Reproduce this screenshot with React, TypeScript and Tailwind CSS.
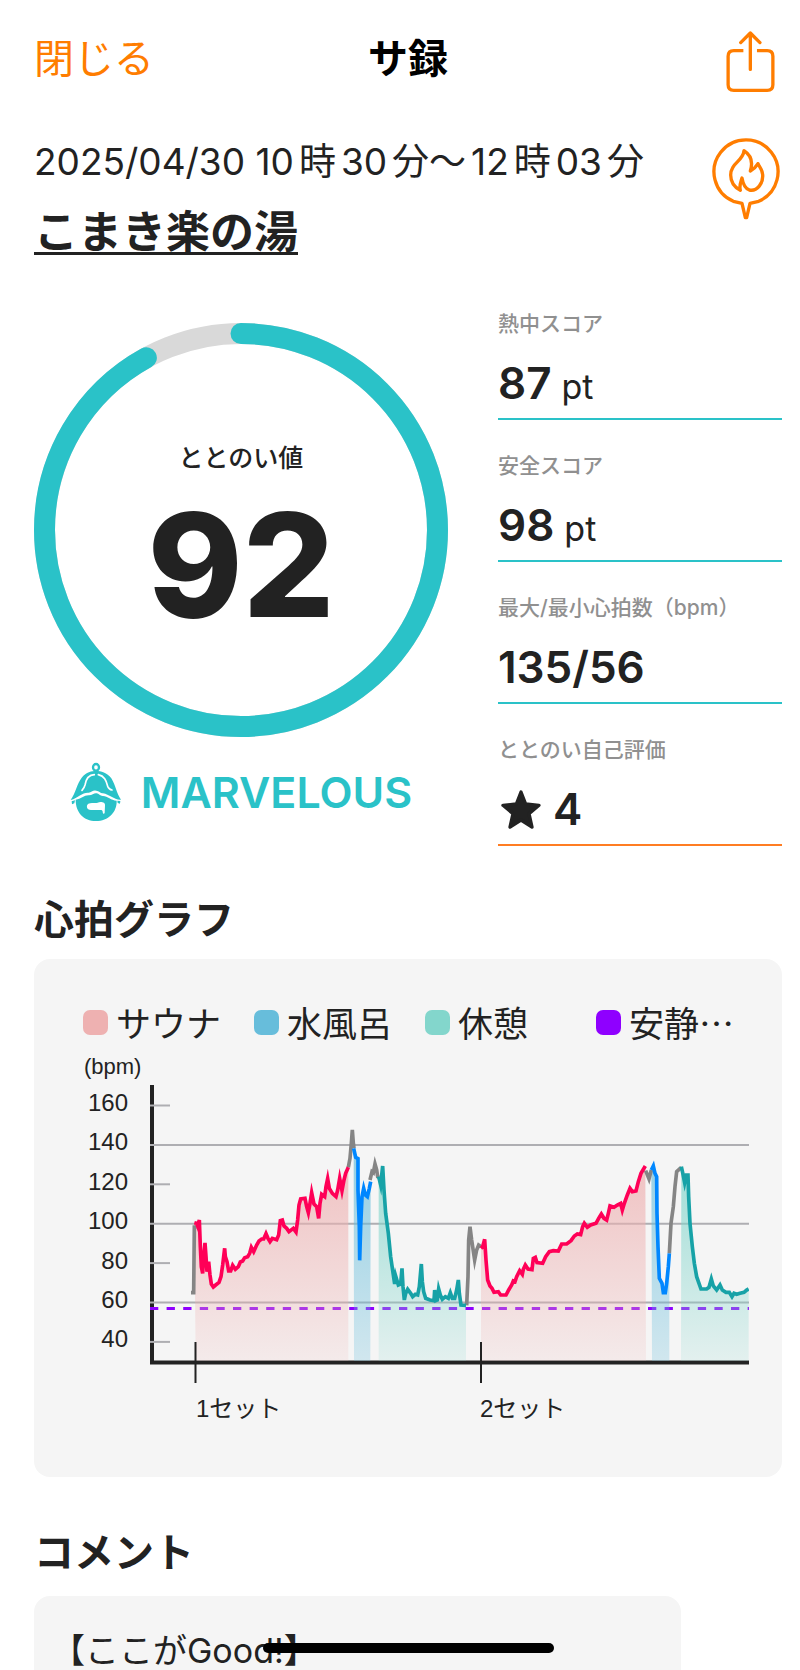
import React from 'react';

const legends = [
  { label: 'サウナ', color: 'bg-[#eeb1b1]' },
  { label: '水風呂', color: 'bg-[#67bddb]' },
  { label: '休憩', color: 'bg-[#83d6cc]' },
  { label: '安静…', color: 'bg-[#8f00ff]' },
];

const axisLabels = [160, 140, 120, 100, 80, 60, 40];

const RED = '#ff0057';
const BLUE = '#0087ff';
const TEAL = '#17a2a7';
const GRAY = '#858585';

// Heart rate trace, split by phase. Plot units are thirds of a pixel.
const sauna1 =
  '343,428 350,430 353,438 358,420 361,500 364,560 368,580 371,530 375,489 378,530 381,575 386,545 390,585 394,612 400,621 407,615 417,607 423,590 428,555 434,505 436,530 441,545 446,573 452,573 458,556 466,568 475,560 481,546 488,543 494,533 503,530 509,520 514,502 521,515 530,495 537,483 545,477 551,477 558,461 564,475 570,485 577,475 590,479 596,465 601,422 607,420 612,438 620,445 627,455 640,445 648,456 653,420 657,375 662,357 675,355 680,380 685,398 690,370 695,338 702,372 710,380 716,415 720,370 725,343 734,350 738,320 743,296 748,325 757,340 768,350 773,330 779,295 786,332 792,300 797,280 805,262';
const water1 =
  '821,205 827,232 834,236 834,330 838,440 839,541 842,440 846,350 851,325 856,345 862,350 868,325 872,305';
const rest1 =
  '896,290 902,315 908,258 912,330 917,400 925,460 932,530 940,585 944,612 947,588 955,615 962,612 966,565 969,620 973,660 977,640 983,628 992,640 998,650 1006,643 1013,645 1018,620 1024,552 1027,605 1031,635 1037,655 1050,660 1062,662 1064,630 1067,662 1072,660 1076,627 1081,645 1087,658 1096,650 1105,655 1111,638 1117,655 1124,655 1130,630 1135,600 1138,640 1143,675 1158,676';
const sauna2 =
  '1203,505 1208,500 1214,478 1218,540 1223,600 1230,618 1236,625 1242,637 1255,635 1262,645 1278,645 1286,630 1295,615 1300,603 1305,605 1310,590 1319,572 1327,583 1330,568 1336,555 1344,567 1356,569 1360,535 1366,532 1371,548 1388,550 1397,530 1408,515 1420,512 1435,513 1445,492 1460,492 1473,482 1483,468 1492,462 1502,464 1508,440 1513,430 1522,442 1532,435 1548,430 1556,415 1564,402 1572,415 1580,420 1585,400 1590,378 1602,382 1612,375 1622,370 1627,390 1633,370 1642,345 1650,325 1657,335 1668,333 1675,305 1683,280 1696,258';
const water2 =
  '1714,270 1720,258 1725,280 1730,290 1731,400 1734,500 1738,595 1746,610 1750,638 1756,638 1760,610 1765,560 1768,520';
const rest2 =
  '1804,260 1808,278 1814,308 1819,285 1824,285 1826,350 1830,430 1837,500 1843,550 1850,590 1857,610 1863,627 1880,627 1887,622 1894,597 1900,618 1910,630 1920,615 1927,630 1938,637 1948,637 1956,650 1962,640 1970,643 1980,640 1992,637 2000,630 2006,627';

const transitions = [
  '333,638 341,638 343,441 350,441',
  '805,262 810,235 814,190 817,150 820,190 822,205',
  '870,300 876,275 880,278 885,252 890,270 893,290 898,292',
  '1160,676 1164,590 1166,480 1170,440 1175,480 1184,540 1190,510 1196,495 1203,500',
  '1697,272 1707,297 1714,270',
  '1768,520 1773,430 1780,380 1785,320 1790,275 1804,262',
];

const phases = [
  { points: sauna1, from: 347, to: 805, stroke: RED, fill: 'url(#sauna)' },
  { points: water1, from: 822, to: 871, stroke: BLUE, fill: 'url(#water)' },
  { points: rest1, from: 896, to: 1158, stroke: TEAL, fill: 'url(#rest)' },
  { points: sauna2, from: 1203, to: 1698, stroke: RED, fill: 'url(#sauna)' },
  { points: water2, from: 1716, to: 1768, stroke: BLUE, fill: 'url(#water)' },
  { points: rest2, from: 1803, to: 2006, stroke: TEAL, fill: 'url(#rest)' },
];

const ShareIcon = () => (
  <svg width="49" height="61" viewBox="979 92 147 184" fill="none" stroke="currentColor" strokeWidth="10" strokeLinecap="round" strokeLinejoin="round">
    <path strokeLinecap="butt" d="M1031 151H1002Q985 151 985 168V254Q985 271 1002 271H1103Q1120 271 1120 254V168Q1120 151 1103 151H1072" />
    <path d="M1052 208V98M1023 127L1052 98L1081 127" />
  </svg>
);

const FirePinIcon = () => (
  <svg className="mr-[2px]" width="68" height="82" viewBox="938 415 204 246" fill="none" stroke="#ff7d00" strokeWidth="10" strokeLinejoin="round">
    <path d="M1002 605L1028 611L1038 654H1042L1052 611L1078 605A96 96 0 1 0 1002 605Z" />
    <path d="M1034 453C1032 484 994 490 994 526C994 550 1008 564 1023 572C1019 558 1024 548 1028 535C1031 553 1036 566 1050 571C1074 576 1092 550 1090 525C1088 506 1080 502 1076 492C1070 502 1064 508 1053 514C1062 486 1054 466 1034 453Z" />
  </svg>
);

const SaunaHatIcon = () => (
  <svg width="51" height="60" viewBox="207 575 153 180" fill="#2ac2c8">
    <ellipse cx="285" cy="591" rx="9" ry="10" fill="none" stroke="#2ac2c8" strokeWidth="7" />
    <path d="M209 689C224 668 228 640 242 622C256 605 272 602 285 602C300 602 318 606 331 624C344 645 346 668 360 688C340 690 326 672 306 669C298 670 294 660 285 661C276 658 270 668 262 667C244 666 232 682 209 689Z" />
    <path d="M280 613C258 614 254 632 252 644C250 652 247 656 243 660M292 613C314 618 316 636 320 648C323 655 327 658 333 659" fill="none" stroke="#fff" strokeWidth="5" strokeLinecap="round" />
    <path d="M224 688C240 686 250 674 264 675C274 675 280 667 287 669C294 670 298 678 306 677C320 678 330 690 347 691C348 726 322 752 285 752C248 752 224 726 224 688Z" />
    <path d="M212 693l10 -3l-2 9l-7 3zM349 691l9 1l-1 8l-7 -2z" />
    <path d="M262 700C272 695 281 700 290 697C298 693 314 695 312 706L311 728C309 732 305 730 305 724C305 719 301 718 295 719H270C256 719 255 704 262 700Z" fill="#fff" />
  </svg>
);

const StarIcon = () => (
  <svg width="40" height="39" viewBox="64 654 120 117" fill="#222" stroke="#222" strokeWidth="10" strokeLinejoin="round">
    <path d="M124 660L138 696L178 700L148 725L157 765L124 744L91 765L100 725L70 700L110 696Z" />
  </svg>
);

const Metric = ({ label, border, children }: { label: string; border: string; children: React.ReactNode }) => (
  <div className={`border-b-2 pb-[9px] ${border}`}>
    <dt className="text-[21px] leading-7 font-medium text-[#909090]">{label}</dt>
    <dd className="mt-[19px] flex h-[52px] items-baseline gap-[10px] text-[44px] leading-[52px] font-semibold">{children}</dd>
  </div>
);

const HeartRateChart = () => (
  <svg viewBox="0 0 666 378" className="block w-full" role="img" aria-label="心拍グラフ">
    <defs>
      <linearGradient id="sauna" gradientUnits="userSpaceOnUse" x1="0" y1="250" x2="0" y2="850">
        <stop offset="0" stopColor="#eeb1b1" stopOpacity="0.75" />
        <stop offset="1" stopColor="#eeb1b1" stopOpacity="0.15" />
      </linearGradient>
      <linearGradient id="water" gradientUnits="userSpaceOnUse" x1="0" y1="200" x2="0" y2="850">
        <stop offset="0" stopColor="#67bddb" stopOpacity="0.7" />
        <stop offset="1" stopColor="#67bddb" stopOpacity="0.25" />
      </linearGradient>
      <linearGradient id="rest" gradientUnits="userSpaceOnUse" x1="0" y1="250" x2="0" y2="850">
        <stop offset="0" stopColor="#83d6cc" stopOpacity="0.75" />
        <stop offset="1" stopColor="#83d6cc" stopOpacity="0.15" />
      </linearGradient>
    </defs>

    <g className="font-['Liberation_Sans','Noto_Sans_CJK_JP',sans-serif]" fill="#222">
      <text x="1" y="24" fontSize="22">(bpm)</text>
      {axisLabels.map((value, i) => (
        <text key={value} x="45" y={61 + i * 39.4} fontSize="24" textAnchor="end">{value}</text>
      ))}
      <text x="113" y="367" fontSize="24">1セット</text>
      <text x="397" y="367" fontSize="24">2セット</text>
    </g>

    <path d="M69 35V312" stroke="#222" strokeWidth="4" />
    {axisLabels.map((value, i) => (
      <path key={value} d={`M67 ${55.5 + i * 39.4}H${i % 2 ? 666 : 87}`} stroke="#aeaeb2" strokeWidth="2" />
    ))}
    <path d="M67 312.5H666" stroke="#222" strokeWidth="4" />
    <path d="M67 258.5H666" stroke="#8f00ff" strokeWidth="3" strokeDasharray="8.3 8.3" />

    <g transform="translate(-3 30) scale(0.33333)" fill="none" strokeWidth="11" strokeMiterlimit="6">
      {phases.map((p) => (
        <polygon key={p.from} points={`${p.from},843 ${p.points} ${p.to},843`} fill={p.fill} />
      ))}
      {transitions.map((points) => (
        <polyline key={points} points={points} stroke={GRAY} />
      ))}
      {phases.map((p) => (
        <polyline key={p.from} points={p.points} stroke={p.stroke} />
      ))}
    </g>
    <path d="M112.5 292V333M398 292V333" stroke="#222" strokeWidth="2" />
  </svg>
);

export default function App() {
  return (
    <div className="min-h-screen overflow-hidden bg-white pr-[18px] pl-[34px] font-['Inter','Noto_Sans_CJK_JP',sans-serif] text-[#222]">
      <header className="grid h-[118px] grid-cols-3 items-center">
        <button className="justify-self-start text-[40px] text-[#ff7d00]">閉じる</button>
        <h1 className="text-center text-[40px] font-bold text-black">サ録</h1>
        <button aria-label="共有" className="mt-1 mr-[7px] justify-self-end text-[#ff7d00]">
          <ShareIcon />
        </button>
      </header>

      <div className="mt-5 flex justify-between">
        <div>
          <p className="flex gap-[5px] text-[37px] leading-[48px] whitespace-nowrap">
            <span>2025/04/30 10</span>
            <span>時</span>
            <span>30</span>
            <span>分〜</span>
            <span>12</span>
            <span>時</span>
            <span>03</span>
            <span>分</span>
          </p>
          <a href="#" className="mt-[14px] inline-block text-[44px] leading-[64px] font-bold underline decoration-[3px] underline-offset-[4px]">
            こまき楽の湯
          </a>
        </div>
        <FirePinIcon />
      </div>

      <section className="mt-[46px] flex gap-[50px]">
        <div className="w-[414px] pt-[13px]">
          <div className="relative">
            <svg viewBox="0 0 414 414" className="block w-full" fill="none" strokeWidth="21">
              <circle cx="207" cy="207" r="196.5" stroke="#d9d9d9" />
              <circle cx="207" cy="207" r="196.5" stroke="#2ac2c8" strokeLinecap="round" pathLength="100" strokeDasharray="92 100" transform="rotate(-90 207 207)" />
            </svg>
            <div className="absolute inset-0 flex flex-col items-center pt-[117px]">
              <p className="text-[25px] leading-9 font-medium">ととのい値</p>
              <p className="mt-[9px] text-[144px] leading-[160px] font-extrabold">92</p>
            </div>
          </div>
          <div className="mt-[25px] flex h-[60px] items-center justify-center gap-[20px]">
            <SaunaHatIcon />
            <span className="text-[43px] font-semibold text-[#2ac2c8]">MARVELOUS</span>
          </div>
        </div>

        <dl className="flex flex-1 flex-col gap-[32px]">
          <Metric label="熱中スコア" border="border-[#2ac2c8]">
            87 <span className="text-[34px] font-normal">pt</span>
          </Metric>
          <Metric label="安全スコア" border="border-[#2ac2c8]">
            98 <span className="text-[34px] font-normal">pt</span>
          </Metric>
          <Metric label="最大/最小心拍数（bpm）" border="border-[#2ac2c8]">
            135/56
          </Metric>
          <Metric label="ととのい自己評価" border="border-[#ff7d23]">
            <span className="flex items-center gap-3 pl-[3px]">
              <StarIcon />
              4
            </span>
          </Metric>
        </dl>
      </section>

      <section className="mt-[44px]">
        <h2 className="text-[40px] leading-[60px] font-bold">心拍グラフ</h2>
        <div className="mt-[9px] rounded-2xl bg-[#f5f5f5] pt-[37px] pb-[49px]">
          <ul className="mb-[2px] grid grid-cols-4 pr-[15px] pl-[49px] font-['Noto_Sans_CJK_JP',sans-serif]">
            {legends.map((item) => (
              <li key={item.label} className="flex items-center gap-2 text-[35px] leading-[52px] whitespace-nowrap">
                <span className={`size-[25px] shrink-0 rounded-[7px] ${item.color}`}></span>
                {item.label}
              </li>
            ))}
          </ul>
          <div className="pr-[33px] pl-[49px]">
            <HeartRateChart />
          </div>
        </div>
      </section>

      <section className="mt-[46px]">
        <h2 className="text-[40px] leading-[60px] font-bold">コメント</h2>
        <div className="mt-[13px] mr-[101px] rounded-t-2xl bg-[#f5f5f5] px-[17px] pt-[29px]">
          <p className="text-[34px] leading-[52px]">【ここがGood!】</p>
        </div>
      </section>

      {/* Home indicator */}
      <div className="fixed inset-x-0 bottom-[17px] flex justify-center pr-[18px] pl-[34px]">
        <div className="h-[10px] w-[291px] rounded-full bg-black"></div>
      </div>
    </div>
  );
}
